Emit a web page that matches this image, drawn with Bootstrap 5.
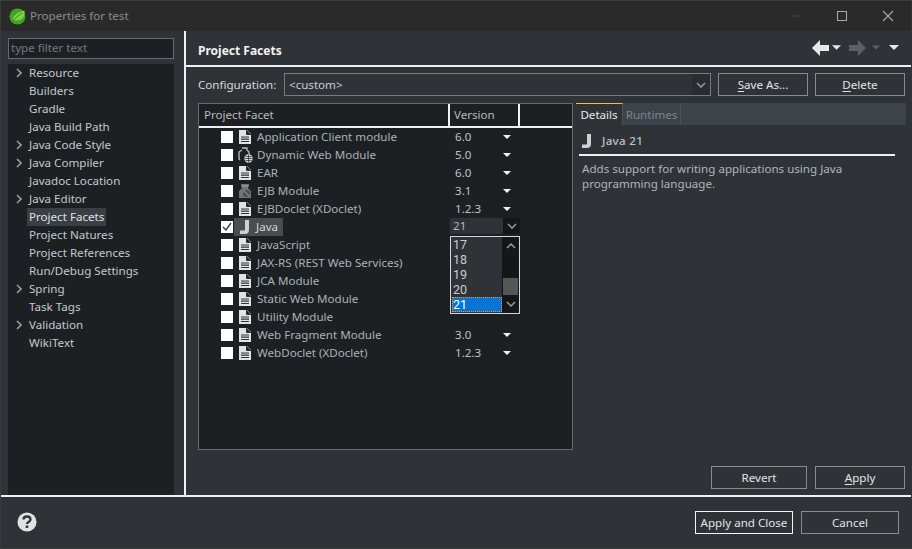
<!doctype html>
<html lang="en"><head><meta charset="utf-8"><title>Properties for test</title>
<link href="https://cdn.jsdelivr.net/npm/bootstrap@5.3.0/dist/css/bootstrap.min.css" rel="stylesheet">
<style>
html,body{height:100%;margin:0;background:#2f3337;overflow:hidden}
body{font-family:"Noto Sans",sans-serif;font-size:11.6px;line-height:18px;color:#c3c9cf}
.win{width:912px;height:549px;border:1px solid #3c3c3c;border-right-color:#333;border-bottom-color:#3c3c3c;position:relative}
.tbar{height:30px;background:#2a2a2a;color:#8c8c8c;padding-left:8px}
.tbar .ttl{margin-left:4px;font-size:11.6px}
.wbtns{margin-left:auto;gap:30px;padding-right:15px}
.mainrow{height:464px}
.side{width:183px;padding:7px 10px 0 7px;border-right:0}
.filter.form-control{height:21px;border-radius:0;border:1px solid #6a6a6a;background:#1d2023;color:#7c7f82;padding:0 2px 3px;font-size:11.6px;line-height:16px;min-height:0;width:166px}
.filter.form-control::placeholder{color:#75797d;opacity:1}
.tree{flex:1;background:#1d2023;margin-top:5px;width:166px;padding-top:0}
.tr{height:18px;display:flex;align-items:center;padding-left:21px;color:#c3c9cf;white-space:nowrap}
.tr>.cv{width:6px;height:10px;margin-left:-13px;margin-right:7px}
.tr.sel span{background:#3b3e42;padding:0 2px;margin-left:-2px;color:#dfe2e5}
.sash{width:2px;background:#f0f0f0}
.rightp{flex:1;min-width:0}
.phead{height:36px;padding:5px 12px 0 12px;border-bottom:2px solid #f0f0f0;flex:none}
.phead h6{margin:0;font-size:12px;font-weight:700;color:#f2f2f2;line-height:18px}
.navs{margin-left:auto;align-items:center;position:relative;top:-3px}
.cfg{padding:6px 6px 0 12px;gap:7px;height:30px;flex:none}
.cfg label{width:86px;margin:0;line-height:23px;color:#d5dade;margin-right:-7px}
.combo{width:427px;height:23px;border:1px solid #7a7a7a;background:#2f3337;padding-left:4px;line-height:21px;position:relative;color:#c8cdd2}
.combo i{position:absolute;right:0;top:0;bottom:0;width:18px;background:#292c30;display:flex;align-items:center;justify-content:center}
.bx.btn{height:23px;width:90px;padding:0;border-radius:0;border:1px solid #8a8a8a;background:transparent;color:#e2e5e8;font-size:11.6px;line-height:21px}
.bx.btn u{text-underline-offset:2px}
.bx.dft.btn{border-color:#f4f4f4;width:98px}
.cnc.btn{width:98px}
.rv.btn{width:96px}
.midrow{padding:6px 0 0 12px;height:346px;flex:none}
.ftbl{width:375px;height:347px;border:1px solid #6a6a6a;background:#1d2023;position:relative}
.fhead{height:24px;border-bottom:2px solid #f0f0f0;color:#b4b9be;line-height:21px;flex:none}
.fhead div:nth-child(1){width:251px;padding-left:5px;border-right:2px solid #f0f0f0}
.fhead div:nth-child(2){width:70px;padding-left:4px;border-right:2px solid #f0f0f0}
.fr{height:18px;display:flex;align-items:center;white-space:nowrap;position:relative}
.ck{width:12px;height:12px;background:#fff;margin-left:22px;flex:none;display:block}
.ico{width:16px;height:16px;margin:0 4px 0 4px;flex:none}
.nm{width:194px;flex:none;color:#a9b1b9}
.ver{width:52px;padding-left:4px;flex:none;color:#bcc2c8}
.dn{width:0;height:0;border-left:4px solid transparent;border-right:4px solid transparent;border-top:4px solid #f2f2f2;display:block}
.jsel{background:#4a4d50;width:49px;height:18px;display:flex;align-items:center;flex:none;color:#d2d5d8}
.jsel svg{margin:0 3px}
.jwrap{width:216px;flex:none;margin-left:1px}
.jcombo{background:#2f3337;height:16px;line-height:16px;width:70px;align-self:flex-start;display:flex;color:#b4b9be;padding-left:3px;position:relative}
.jcombo i{position:absolute;right:0;top:0;bottom:0;width:17px;background:#141618;display:flex;align-items:center;justify-content:center}
.pop{position:absolute;left:251px;top:132px;width:70px;height:78px;border:1px solid #d6d6d6;background:#2f3337;color:#c9ced3;line-height:15px;z-index:5;font-family:Roboto,sans-serif}
.pop .opt{height:15px;padding-left:2px;width:52px;font-size:12.5px}
.pop .opt.on{background:#0a74d6;color:#fff;outline:1px dotted #e89a2c;outline-offset:-1px;margin-left:1px;padding-left:1px;width:50px}
.sb{position:absolute;right:0;top:0;bottom:0;width:17px;background:#141618}
.sb i{position:absolute;left:1px;width:15px;display:flex;justify-content:center}
.thumb{position:absolute;left:1px;top:41px;width:15px;height:17px;background:#565656}
.det{width:330px;margin-left:3px}
.tabs{height:22px;background:#3d434a;flex:none}
.tb1{width:47px;background:#2f3337;border-top:1px solid #e8c34a;border-right:1px solid #4c5258;text-align:center;color:#e6e8ea;line-height:22px}
.tb2{width:58px;border-right:1px solid #4c5258;text-align:center;color:#7d848b;line-height:23px}
.dh{height:31px;width:316px;margin-left:3px;padding-top:2px;border-bottom:2px solid #f0f0f0;color:#bcc3ca;font-weight:500;flex:none;gap:7px}
.dh b{font-weight:500;letter-spacing:.3px}
.dt{padding:5px 0 0 6px;line-height:15px;color:#aeb5bc;width:310px}
.actrow{height:49px;flex:none;gap:8px;padding:23px 6px 0 0;justify-content:flex-end;align-items:flex-start}
.foot{height:52px;border-top:2px solid #f0f0f0;padding:0 12px 0 16px;flex:none}
.foot .bts{margin-left:auto;gap:8px}
.g1{margin-left:3px}.g2{margin-left:8px}.g3{margin-left:6px}.g4{margin-left:9px}
</style></head>
<body>
<svg width="0" height="0" class="position-absolute">
<symbol id="doc" viewBox="0 0 16 16"><path d="M2 1h8l4 4v10H2z" fill="#e2e2e2"/><path d="M9.500 1v4.500H14" fill="#1d2023" stroke="#1d2023" stroke-width=".8"/><path d="M4 8h8M4 10.200h8M4 12.500h8" stroke="#333" stroke-width="1.200"/></symbol>
<symbol id="jj" viewBox="0 0 16 16"><path d="M8 1h4v10c0 3-2 4-4 4H3v-3.500h4c.7 0 1-.5 1-1.500z" fill="#cfcfcf"/></symbol>
<symbol id="web" viewBox="0 0 16 16"><path d="M5 1h5v2l2 2v4M3 13l-1-1V5l3-2" fill="none" stroke="#bdbdbd" stroke-width="1.300"/><circle cx="11.500" cy="11.500" r="4.200" fill="#d8d8d8"/><path d="M7.500 11.500h8M11.500 7.500v8M8.500 9.500h6M8.500 13.500h6" stroke="#222" stroke-width=".7"/></symbol>
<symbol id="ejb" viewBox="0 0 16 16"><path d="M4 1h8v3h-1v1l3 3v7H2V8l3-3V4H4z" fill="#737373"/><path d="M5 3h6" stroke="#aaa"/><circle cx="9.500" cy="10.500" r="3.500" fill="#4d4d4d"/><path d="M7 8l5 5" stroke="#8a8a8a" stroke-width="1.300"/></symbol>
<symbol id="chev" viewBox="0 0 6 10"><path d="M1 1l4 4-4 4" fill="none" stroke="#9a9a9a" stroke-width="1.600"/></symbol>
<symbol id="cd" viewBox="0 0 10 6"><path d="M1 1l4 4 4-4" fill="none" stroke="#9a9a9a" stroke-width="1.500"/></symbol>
<symbol id="cu" viewBox="0 0 10 6"><path d="M1 5l4-4 4 4" fill="none" stroke="#9a9a9a" stroke-width="1.500"/></symbol>
</svg>
<div class="win d-flex flex-column">
 <div class="tbar d-flex align-items-center">
  <svg width="17" height="17" viewBox="0 0 17 17"><circle cx="8.500" cy="8.500" r="8" fill="#3fa521"/><path d="M4 12C4 7 9 4 15.500 2.500c.5 6-2 10-7.500 10-1.500 0-2.500 0-4-.5z" fill="#7fd04a"/><path d="M3 14.500C6 10 9 8 13 5" stroke="#2f8a16" fill="none"/></svg>
  <span class="ttl">Properties for test</span>
  <div class="wbtns d-flex align-items-center">
   <svg width="16" height="16" viewBox="0 0 16 16"><path d="M3 8h10" stroke="#444"/></svg>
   <svg width="16" height="16" viewBox="0 0 16 16"><rect x="3.500" y="3.500" width="9" height="9" fill="none" stroke="#aaa"/></svg>
   <svg width="16" height="16" viewBox="0 0 16 16"><path d="M3 3l10 10M13 3L3 13" stroke="#aaa" stroke-width="1.100"/></svg>
  </div>
 </div>
 <div class="mainrow d-flex">
  <div class="side d-flex flex-column">
   <input class="filter form-control" placeholder="type filter text" aria-label="filter">
   <div class="tree">
    <div class="tr"><svg class="cv"><use href="#chev"/></svg><span>Resource</span></div>
    <div class="tr"><span>Builders</span></div>
    <div class="tr"><span>Gradle</span></div>
    <div class="tr"><span>Java Build Path</span></div>
    <div class="tr"><svg class="cv"><use href="#chev"/></svg><span>Java Code Style</span></div>
    <div class="tr"><svg class="cv"><use href="#chev"/></svg><span>Java Compiler</span></div>
    <div class="tr"><span>Javadoc Location</span></div>
    <div class="tr"><svg class="cv"><use href="#chev"/></svg><span>Java Editor</span></div>
    <div class="tr sel"><span>Project Facets</span></div>
    <div class="tr"><span>Project Natures</span></div>
    <div class="tr"><span>Project References</span></div>
    <div class="tr"><span>Run/Debug Settings</span></div>
    <div class="tr"><svg class="cv"><use href="#chev"/></svg><span>Spring</span></div>
    <div class="tr"><span>Task Tags</span></div>
    <div class="tr"><svg class="cv"><use href="#chev"/></svg><span>Validation</span></div>
    <div class="tr"><span>WikiText</span></div>
   </div>
  </div>
  <div class="sash"></div>
  <div class="rightp d-flex flex-column">
   <div class="phead d-flex align-items-center">
    <h6>Project Facets</h6>
    <div class="navs d-flex">
     <svg width="17" height="16" viewBox="0 0 17 16"><path d="M8 0L0 8l8 8v-5h9V5H8z" fill="#e8e8e8"/></svg>
     <svg width="9" height="5" viewBox="0 0 8 4" class="g1"><path d="M0 0h8L4 4z" fill="#e8e8e8"/></svg>
     <svg width="17" height="16" viewBox="0 0 17 16" class="g2"><path d="M9 0l8 8-8 8v-5H0V5h9z" fill="#5c6066"/></svg>
     <svg width="8" height="5" viewBox="0 0 8 4" class="g3"><path d="M0 0h8L4 4z" fill="#5c6066"/></svg>
     <svg width="10" height="5" viewBox="0 0 8 4" class="g4"><path d="M0 0h8L4 4z" fill="#e8e8e8"/></svg>
    </div>
   </div>
   <div class="cfg d-flex">
    <label>Configuration:</label>
    <div class="combo">&lt;custom&gt;<i><svg width="10" height="6"><use href="#cd"/></svg></i></div>
    <button class="bx btn"><u>S</u>ave As...</button>
    <button class="bx btn"><u>D</u>elete</button>
   </div>
   <div class="midrow d-flex">
    <div class="ftbl d-flex flex-column">
     <div class="fhead d-flex"><div>Project Facet</div><div>Version</div></div>
     <div class="fr"><span class="ck"></span><svg class="ico"><use href="#doc"/></svg><span class="nm">Application Client module</span><span class="ver">6.0</span><i class="dn"></i></div>
     <div class="fr"><span class="ck"></span><svg class="ico"><use href="#web"/></svg><span class="nm">Dynamic Web Module</span><span class="ver">5.0</span><i class="dn"></i></div>
     <div class="fr"><span class="ck"></span><svg class="ico"><use href="#doc"/></svg><span class="nm">EAR</span><span class="ver">6.0</span><i class="dn"></i></div>
     <div class="fr"><span class="ck"></span><svg class="ico"><use href="#ejb"/></svg><span class="nm">EJB Module</span><span class="ver">3.1</span><i class="dn"></i></div>
     <div class="fr"><span class="ck"></span><svg class="ico"><use href="#doc"/></svg><span class="nm">EJBDoclet (XDoclet)</span><span class="ver">1.2.3</span><i class="dn"></i></div>
     <div class="fr"><span class="ck d-flex align-items-center justify-content-center"><svg width="10" height="10" viewBox="0 0 10 10"><path d="M1 5l3 3 5-7" fill="none" stroke="#333" stroke-width="1.300"/></svg></span><div class="jwrap d-flex"><div class="jsel"><svg width="16" height="16"><use href="#jj"/></svg>Java</div></div><div class="jcombo">21<i><svg width="10" height="6"><use href="#cd"/></svg></i></div></div>
     <div class="fr"><span class="ck"></span><svg class="ico"><use href="#doc"/></svg><span class="nm">JavaScript</span></div>
     <div class="fr"><span class="ck"></span><svg class="ico"><use href="#doc"/></svg><span class="nm">JAX-RS (REST Web Services)</span></div>
     <div class="fr"><span class="ck"></span><svg class="ico"><use href="#doc"/></svg><span class="nm">JCA Module</span></div>
     <div class="fr"><span class="ck"></span><svg class="ico"><use href="#doc"/></svg><span class="nm">Static Web Module</span></div>
     <div class="fr"><span class="ck"></span><svg class="ico"><use href="#doc"/></svg><span class="nm">Utility Module</span></div>
     <div class="fr"><span class="ck"></span><svg class="ico"><use href="#doc"/></svg><span class="nm">Web Fragment Module</span><span class="ver">3.0</span><i class="dn"></i></div>
     <div class="fr"><span class="ck"></span><svg class="ico"><use href="#doc"/></svg><span class="nm">WebDoclet (XDoclet)</span><span class="ver">1.2.3</span><i class="dn"></i></div>
     <div class="pop">
      <div class="opt">17</div><div class="opt">18</div><div class="opt">19</div><div class="opt">20</div><div class="opt on">21</div>
      <div class="sb"><i style="top:6px"><svg width="10" height="6"><use href="#cu"/></svg></i><div class="thumb"></div><i style="top:64px"><svg width="10" height="6"><use href="#cd"/></svg></i></div>
     </div>
    </div>
    <div class="det d-flex flex-column">
     <div class="tabs d-flex"><div class="tb1">Details</div><div class="tb2">Runtimes</div></div>
     <div class="dh d-flex align-items-center"><svg width="16" height="16"><use href="#jj"/></svg><b>Java 21</b></div>
     <div class="dt">Adds support for writing applications using Java programming language.</div>
    </div>
   </div>
   <div class="actrow d-flex">
    <button class="bx btn rv">Revert</button>
    <button class="bx btn"><u>A</u>pply</button>
   </div>
  </div>
 </div>
 <div class="foot d-flex align-items-center">
  <svg width="20" height="20" viewBox="0 0 20 20"><circle cx="10" cy="10" r="9.500" fill="#e2e2e2"/><path d="M6.500 7.500C6.500 5.500 8 4.500 10 4.500s3.500 1 3.500 3c0 2.500-3.500 2.500-3.500 4.500" fill="none" stroke="#2f3337" stroke-width="2.300"/><rect x="8.700" y="13.500" width="2.600" height="2.500" fill="#2f3337"/></svg>
  <div class="bts d-flex">
   <button class="bx btn dft">Apply and Close</button>
   <button class="bx btn cnc">Cancel</button>
  </div>
 </div>
</div>
</body></html>
